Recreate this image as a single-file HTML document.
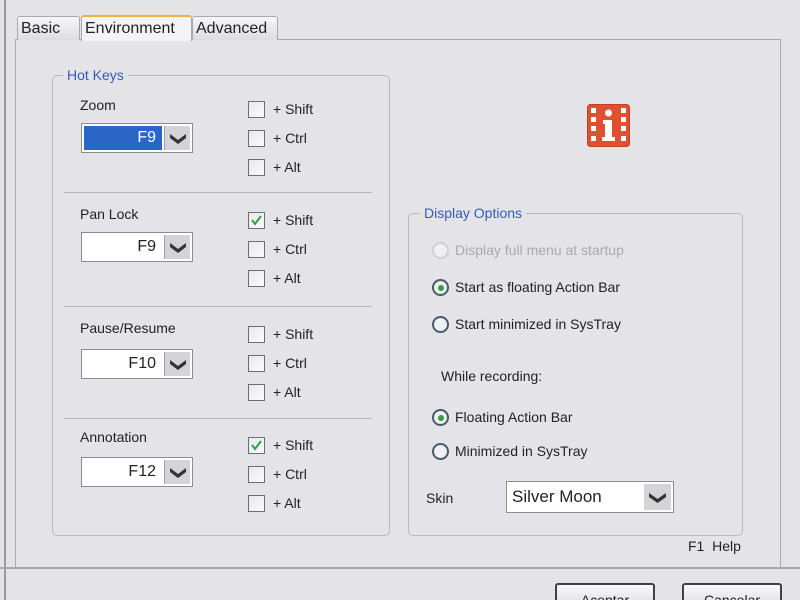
<!DOCTYPE html>
<html style="overflow:hidden;width:800px;height:600px"><head><meta charset="utf-8"><style>
*{box-sizing:border-box;margin:0;padding:0}
body{width:800px;height:600px;background:#e4e4e8;position:relative;overflow:hidden;font-family:"Liberation Sans","DejaVu Sans",sans-serif;font-size:14px;color:#222}
.a{position:absolute}
.tab{position:absolute;top:16px;height:24px;border:1px solid #a8a8b0;border-bottom:none;background:linear-gradient(#f6f6f8,#dcdce2);font-size:16px;padding:3px 3px 0;border-radius:3px 3px 0 0}
.grp{position:absolute;border:1px solid #b8b8c0;border-radius:5px}
.lg{position:absolute;top:-9px;background:#e4e4e8;color:#3558c0;padding:0 4px}
.cb{position:absolute;width:17px;height:17px;border:1px solid #6c6c74;background:linear-gradient(135deg,#e8e8ec,#fbfbfc)}
.cl{position:absolute}
.sep{position:absolute;left:64px;width:308px;height:1px;background:#b4b4bc}
.cmb{position:absolute;width:112px;height:30px;border:1px solid #8c8c94;background:#fff;padding:2px}
.cmb .v{position:absolute;left:2px;top:2px;width:78px;height:24px;text-align:right;padding:3px 6px 0 0;font-size:16px}
.cmb .b{position:absolute;right:2px;top:2px;width:26px;height:24px;background:#d4d4d8;border-left:1px solid #a0a0a8}
.rd{position:absolute;width:17px;height:17px;border-radius:50%;border:2px solid #4a5a68;background:#eef0f2}
.rd.on::after{content:"";position:absolute;left:3.5px;top:3.5px;width:6px;height:6px;border-radius:50%;background:#30a040}
.btn{position:absolute;top:583px;width:100px;height:17px;border:2px solid #404048;border-bottom:none;border-radius:3px 3px 0 0;background:linear-gradient(#fafafa,#e6e6ea);text-align:center;padding-top:8px;overflow:hidden;line-height:14px}
</style></head><body>
<div class="a" style="left:4px;top:0;width:2px;height:600px;background:#9a9aa2"></div>
<div class="a" style="left:15px;top:39px;width:766px;height:529px;border:1px solid #a8a8b0"></div>
<div class="a" style="left:0;top:567px;width:800px;height:2px;background:#a8a8b0"></div>
<div class="tab" style="left:17px;width:63px">Basic</div>
<div class="tab" style="left:81px;width:111px;top:15px;height:26px;background:#f4f4f6;border-top:2px solid #f0b040">Environment</div>
<div class="tab" style="left:192px;width:86px">Advanced</div>

<div class="grp" style="left:52px;top:75px;width:338px;height:461px"><span class="lg" style="left:10px">Hot Keys</span></div>
<div class="sep" style="top:192px"></div>
<div class="sep" style="top:306px"></div>
<div class="sep" style="top:418px"></div>

<div class="cl" style="left:80px;top:97px">Zoom</div>
<div class="cl" style="left:80px;top:206px">Pan Lock</div>
<div class="cl" style="left:80px;top:320px">Pause/Resume</div>
<div class="cl" style="left:80px;top:429px">Annotation</div>

<div class="cmb" style="left:81px;top:123px"><div class="v" style="background:#2a66c8;color:#fff">F9</div><div class="b"><svg width="26" height="24"><path d="M5 8 L13 14 L21 8 L21 12 L13 18 L5 12Z" fill="#333"/></svg></div></div>
<div class="cmb" style="left:81px;top:232px"><div class="v">F9</div><div class="b"><svg width="26" height="24"><path d="M5 8 L13 14 L21 8 L21 12 L13 18 L5 12Z" fill="#333"/></svg></div></div>
<div class="cmb" style="left:81px;top:349px"><div class="v">F10</div><div class="b"><svg width="26" height="24"><path d="M5 8 L13 14 L21 8 L21 12 L13 18 L5 12Z" fill="#333"/></svg></div></div>
<div class="cmb" style="left:81px;top:457px"><div class="v">F12</div><div class="b"><svg width="26" height="24"><path d="M5 8 L13 14 L21 8 L21 12 L13 18 L5 12Z" fill="#333"/></svg></div></div>

<div class="cb" style="left:248px;top:101px"></div><div class="cl" style="left:273px;top:101px">+ Shift</div>
<div class="cb" style="left:248px;top:130px"></div><div class="cl" style="left:273px;top:130px">+ Ctrl</div>
<div class="cb" style="left:248px;top:159px"></div><div class="cl" style="left:273px;top:159px">+ Alt</div>

<div class="cb" style="left:248px;top:212px"><svg width="15" height="15" style="position:absolute;left:0;top:0"><path d="M3 7 L6 11 L12 3" stroke="#30a040" stroke-width="2" fill="none"/></svg></div><div class="cl" style="left:273px;top:212px">+ Shift</div>
<div class="cb" style="left:248px;top:241px"></div><div class="cl" style="left:273px;top:241px">+ Ctrl</div>
<div class="cb" style="left:248px;top:270px"></div><div class="cl" style="left:273px;top:270px">+ Alt</div>

<div class="cb" style="left:248px;top:326px"></div><div class="cl" style="left:273px;top:326px">+ Shift</div>
<div class="cb" style="left:248px;top:355px"></div><div class="cl" style="left:273px;top:355px">+ Ctrl</div>
<div class="cb" style="left:248px;top:384px"></div><div class="cl" style="left:273px;top:384px">+ Alt</div>

<div class="cb" style="left:248px;top:437px"><svg width="15" height="15" style="position:absolute;left:0;top:0"><path d="M3 7 L6 11 L12 3" stroke="#30a040" stroke-width="2" fill="none"/></svg></div><div class="cl" style="left:273px;top:437px">+ Shift</div>
<div class="cb" style="left:248px;top:466px"></div><div class="cl" style="left:273px;top:466px">+ Ctrl</div>
<div class="cb" style="left:248px;top:495px"></div><div class="cl" style="left:273px;top:495px">+ Alt</div>

<svg class="a" style="left:587px;top:104px" width="43" height="43" viewBox="0 0 43 43">
<rect x="0.5" y="0.5" width="42" height="42" rx="3" fill="#e05030" stroke="#c04020"/>
<g fill="#fff"><rect x="4" y="4" width="5" height="5"/><rect x="4" y="13" width="5" height="5"/><rect x="4" y="22" width="5" height="5"/><rect x="4" y="32" width="5" height="5"/>
<rect x="34" y="4" width="5" height="5"/><rect x="34" y="13" width="5" height="5"/><rect x="34" y="22" width="5" height="5"/><rect x="34" y="32" width="5" height="5"/>
<circle cx="21.5" cy="9" r="3.5"/><path d="M16 16 H25 V33 H28 V37 H15 V33 H18 V20 H16Z"/></g></svg>

<div class="grp" style="left:408px;top:213px;width:335px;height:323px"><span class="lg" style="left:11px">Display Options</span></div>
<div class="rd" style="left:432px;top:242px;border-color:#d0d0d4;background:#f0f0f2"></div><div class="cl" style="left:455px;top:242px;color:#a8a8ae">Display full menu at startup</div>
<div class="rd on" style="left:432px;top:279px"></div><div class="cl" style="left:455px;top:279px">Start as floating Action Bar</div>
<div class="rd" style="left:432px;top:316px"></div><div class="cl" style="left:455px;top:316px">Start minimized in SysTray</div>
<div class="cl" style="left:441px;top:368px">While recording:</div>
<div class="rd on" style="left:432px;top:409px"></div><div class="cl" style="left:455px;top:409px">Floating Action Bar</div>
<div class="rd" style="left:432px;top:443px"></div><div class="cl" style="left:455px;top:443px">Minimized in SysTray</div>
<div class="cl" style="left:426px;top:490px">Skin</div>
<div class="a" style="left:506px;top:481px;width:168px;height:32px;border:1px solid #8c8c94;background:#fff"><div class="a" style="left:5px;top:5px;font-size:17px">Silver Moon</div><div class="a" style="right:2px;top:2px;width:27px;height:26px;background:#d4d4d8"><svg width="27" height="26"><path d="M5 9 L13.5 15 L22 9 L22 13 L13.5 19 L5 13Z" fill="#333"/></svg></div></div>
<div class="cl" style="left:688px;top:538px">F1&nbsp; Help</div>

<div class="btn" style="left:555px">Aceptar</div>
<div class="btn" style="left:682px">Cancelar</div>
</body></html>
